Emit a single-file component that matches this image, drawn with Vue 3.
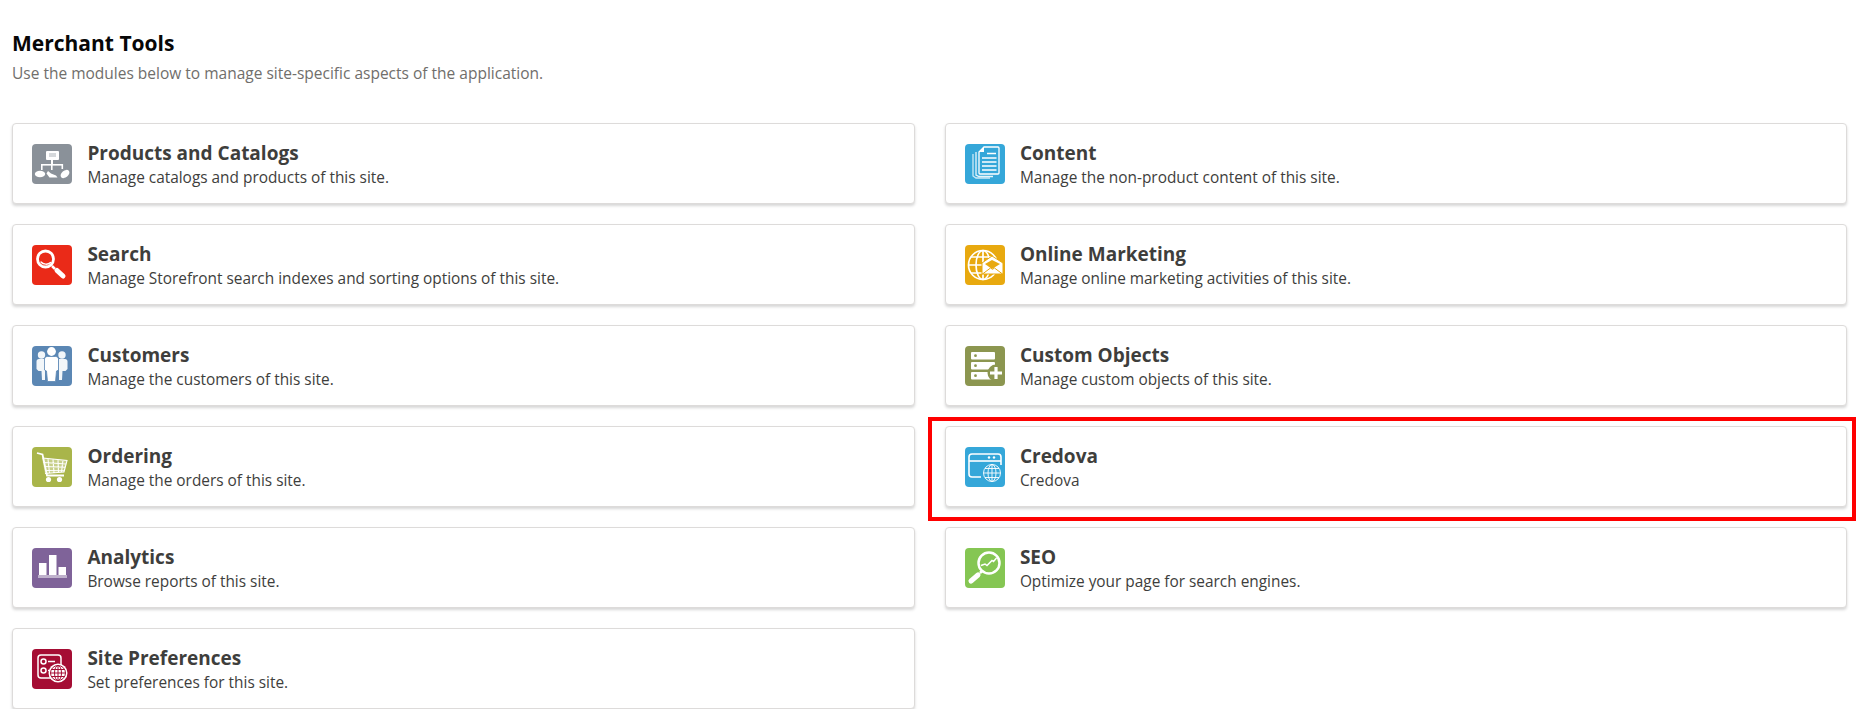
<template>
  <div class="page">
    <h1 class="title">Merchant Tools</h1>
    <p class="subtitle">Use the modules below to manage site-specific aspects of the application.</p>

    <div class="grid">
      <div v-for="card in cards" :key="card.name" class="card" :class="{ marked: card.marked }">
        <div class="icon" :style="{ background: card.color }">
          <svg viewBox="0 0 40 40" width="40" height="40">
            <!-- products: tree of nodes -->
            <g v-if="card.icon === 'products'" fill="#fff">
              <rect x="14" y="7" width="13" height="9" rx="1" />
              <rect x="17" y="9" width="7" height="4" fill="#d5d8db" />
              <rect x="19" y="16" width="2" height="5" />
              <rect x="9" y="20" width="22" height="1.6" />
              <rect x="9" y="20" width="1.6" height="6" />
              <rect x="19" y="20" width="1.6" height="6" />
              <rect x="29.5" y="20" width="1.6" height="5" />
              <ellipse cx="8" cy="30" rx="5.2" ry="3.2" />
              <path d="M16 27l3 2.5 5 2 1.5 2h-8l-3-4z" />
              <ellipse cx="33" cy="30" rx="5" ry="3.4" transform="rotate(-40 33 30)" />
            </g>

            <g v-else-if="card.icon === 'search'" fill="none" stroke="#fff">
              <circle cx="13.500" cy="14" r="8" stroke-width="2.800" />
              <path d="M9 17c2 2.600 7 3 9.500 .5" stroke-width="1.400" stroke-linecap="round" />
              <path d="M20 21l3 3" stroke-width="2.500" />
              <path d="M25 25.500l6 5.500" stroke-width="5" stroke-linecap="round" />
            </g>

            <g v-else-if="card.icon === 'customers'" fill="#fff">
              <circle cx="9.500" cy="9" r="3.700" opacity=".92" />
              <circle cx="30" cy="9" r="3.700" opacity=".92" />
              <path d="M4.500 15.500c0-1.500 1-2.500 2.500-2.500h6v21h-3l-.5-9h-3l-2-2z" opacity=".92" />
              <path d="M35.500 15.500c0-1.500-1-2.500-2.500-2.500h-6v21h3l.5-9h3l2-2z" opacity=".92" />
              <circle cx="19.500" cy="5.500" r="4.400" />
              <path d="M12.500 13c0-1.500 1.500-2.500 3-2.500h8c1.500 0 3 1 3 2.500v11l-2 1-1 10.500h-8l-1-10.500-2-1z" stroke="#5b87b4" stroke-width=".8" />
            </g>

            <g v-else-if="card.icon === 'ordering'">
              <path d="M5 6l5.500 1.500 4.500 21h17" fill="none" stroke="#fff" stroke-width="1.800" />
              <path d="M10 11l25 2.500-3 11.500-19 1.500z" fill="#fff" opacity=".35" />
              <path d="M10.500 11l24.500 2.500-3 11.500-19 1.500M16 12l1.500 14M21 12.500l1 13.500M26 13l.500 12.500M31 13l-1.500 12M11.500 15.500l23 1.500M12.500 19.500l21 .8M13 23.500l19.500 .3" fill="none" stroke="#fff" stroke-width="1.100" />
              <circle cx="16.500" cy="32.500" r="2.600" fill="#fff" />
              <circle cx="27.500" cy="32.500" r="2.600" fill="#fff" />
            </g>

            <g v-else-if="card.icon === 'analytics'" fill="#fff">
              <rect x="7" y="15" width="7.500" height="12" />
              <rect x="17" y="7" width="7.500" height="20" />
              <rect x="26.500" y="19" width="7.500" height="8" />
              <rect x="6" y="27" width="29" height="3" opacity=".5" />
            </g>

            <g v-else-if="card.icon === 'prefs'" fill="none" stroke="#fff">
              <path d="M22 29H9a3 3 0 0 1-3-3V9a3 3 0 0 1 3-3h17a3 3 0 0 1 3 3v7" stroke-width="1.500" />
              <circle cx="11.500" cy="12.500" r="2.500" stroke-width="1.500" />
              <circle cx="11.500" cy="21.500" r="2.500" stroke-width="1.500" />
              <path d="M16 12.500h7M16 21.500h3" stroke-width="1.500" />
              <circle cx="26" cy="24" r="9.500" fill="#fff" stroke="none" />
              <g stroke="#a50d34" stroke-width="1">
                <circle cx="26" cy="24" r="7.500" />
                <ellipse cx="26" cy="24" rx="3.500" ry="7.500" />
                <path d="M26 16.500v15M18.500 24h15M19.500 20.500h13M19.500 27.500h13" />
              </g>
            </g>

            <g v-else-if="card.icon === 'content'">
              <path d="M8 10v22l3 2h14" fill="none" stroke="#cdeaf6" stroke-width="1.300" />
              <path d="M11 8v23l3 1.500h14" fill="none" stroke="#e6f5fb" stroke-width="1.300" />
              <path d="M19 3h14a1 1 0 0 1 1 1v25a1 1 0 0 1-1 1H15a1 1 0 0 1-1-1V8z" fill="#35a7d9" stroke="#fff" stroke-width="1.300" />
              <path d="M14.500 8H19V3z" fill="#fff" />
              <path d="M22 9.500h9M17 14h14.500M17 18h14.500M17 22h14.500M17 26h14.500" stroke="#fff" stroke-width="1.700" />
            </g>

            <g v-else-if="card.icon === 'marketing'">
              <g fill="none" stroke="#fff" stroke-width="1.700">
                <circle cx="18" cy="20" r="14.500" />
                <ellipse cx="18" cy="20" rx="7" ry="14.500" />
                <path d="M18 5.500v29M3.500 20h29M6 12h24M6 28h24" />
              </g>
              <path d="M17 18l10-7 11 7v11H17z" fill="#fff" stroke="#e8a90f" stroke-width="1" />
              <path d="M20 19l7 5 8-5-8-4z" fill="#e8a90f" />
              <path d="M17.500 29l8-6 2 1.300 2-1.300 8 6" fill="none" stroke="#e8a90f" stroke-width="1" />
            </g>

            <g v-else-if="card.icon === 'objects'">
              <rect x="6" y="6" width="24" height="7.500" rx="1" fill="#fff" />
              <rect x="6" y="16" width="24" height="7.500" rx="1" fill="#fff" />
              <rect x="6" y="26" width="24" height="7.500" rx="1" fill="#fff" />
              <circle cx="10.500" cy="9.700" r="1.400" fill="#8c9650" />
              <circle cx="10.500" cy="19.700" r="1.400" fill="#8c9650" />
              <circle cx="10.500" cy="29.700" r="1.400" fill="#8c9650" />
              <circle cx="31" cy="27" r="8.500" fill="#8c9650" />
              <path d="M31 21v12M25 27h12" stroke="#fff" stroke-width="3.200" />
            </g>

            <g v-else-if="card.icon === 'credova'" fill="none" stroke="#fff">
              <path d="M16 30H7a3 3 0 0 1-3-3V10a3 3 0 0 1 3-3h26a3 3 0 0 1 3 3v8" stroke-width="1.600" />
              <path d="M4 14h32" stroke-width="1.600" />
              <circle cx="24" cy="10.500" r="1.200" fill="#fff" stroke="none" />
              <circle cx="29" cy="10.500" r="1.200" fill="#fff" stroke="none" />
              <g stroke-width=".9">
                <circle cx="27" cy="26" r="8.500" />
                <ellipse cx="27" cy="26" rx="4" ry="8.500" />
                <path d="M27 17.500v17M18.500 26h17M20 21.500h14M20 30.500h14" />
              </g>
            </g>

            <g v-else-if="card.icon === 'seo'" fill="none" stroke="#fff">
              <circle cx="24" cy="15" r="10.500" stroke-width="2.500" />
              <path d="M16 17.500l4-1.500 2 1.500 5-5 1.500 1 3-3.500" stroke-width="1.500" />
              <path d="M17 23l-2 2" stroke-width="2.500" />
              <path d="M13 27l-7 6" stroke-width="5" stroke-linecap="round" />
            </g>
          </svg>
        </div>
        <div class="text">
          <div class="name">{{ card.name }}</div>
          <div class="desc">{{ card.desc }}</div>
        </div>
      </div>
    </div>
  </div>
</template>

<script setup>
// order is row by row, left column first
const cards = [
  { name: 'Products and Catalogs', desc: 'Manage catalogs and products of this site.', icon: 'products', color: '#8a9199' },
  { name: 'Content', desc: 'Manage the non-product content of this site.', icon: 'content', color: '#35a7d9' },
  { name: 'Search', desc: 'Manage Storefront search indexes and sorting options of this site.', icon: 'search', color: '#ea2a18' },
  { name: 'Online Marketing', desc: 'Manage online marketing activities of this site.', icon: 'marketing', color: '#e8a90f' },
  { name: 'Customers', desc: 'Manage the customers of this site.', icon: 'customers', color: '#5b87b4' },
  { name: 'Custom Objects', desc: 'Manage custom objects of this site.', icon: 'objects', color: '#8c9650' },
  { name: 'Ordering', desc: 'Manage the orders of this site.', icon: 'ordering', color: '#a9b54a' },
  { name: 'Credova', desc: 'Credova', icon: 'credova', color: '#35a7d9', marked: true },
  { name: 'Analytics', desc: 'Browse reports of this site.', icon: 'analytics', color: '#7f6399' },
  { name: 'SEO', desc: 'Optimize your page for search engines.', icon: 'seo', color: '#85c653' },
  { name: 'Site Preferences', desc: 'Set preferences for this site.', icon: 'prefs', color: '#a50d34' }
]
</script>

<style>
body {
  background: #fff;
}
</style>

<style scoped>
.page {
  padding: 29px 16px 0 12px;
  font-family: "Open Sans", "Noto Sans", sans-serif;
  color: #3e3e3c;
}

.title {
  margin: 0;
  font-size: 21px;
  line-height: 28px;
  font-weight: 700;
  color: #080707;
}

.subtitle {
  margin: 6px 0 0;
  font-size: 15.5px;
  line-height: 20px;
  color: #706e6b;
}

.grid {
  display: grid;
  grid-template-columns: 1fr 1fr;
  column-gap: 30px;
  row-gap: 20.1px;
  margin-top: 40px;
}

.card {
  position: relative;
  display: flex;
  align-items: center;
  gap: 15px;
  height: 81px;
  box-sizing: border-box;
  padding-left: 19.4px;
  background: #fff;
  border: 1px solid #dddbda;
  border-radius: 4px;
  box-shadow: 0 2px 3px rgba(0, 0, 0, 0.16);
}

/* red annotation drawn over the Credova card */
.card.marked::after {
  content: '';
  position: absolute;
  top: -10px;
  left: -18px;
  right: -10px;
  bottom: -15px;
  border: 4px solid #f00;
  pointer-events: none;
}

.icon {
  flex: none;
  width: 40px;
  height: 40px;
  border-radius: 4px;
}

.icon svg {
  display: block;
}

.text {
  padding-top: 3px;
}

.name {
  font-size: 19px;
  line-height: 24px;
  font-weight: 700;
}

.desc {
  margin-top: 2px;
  font-size: 15.4px;
  line-height: 22px;
}
</style>
